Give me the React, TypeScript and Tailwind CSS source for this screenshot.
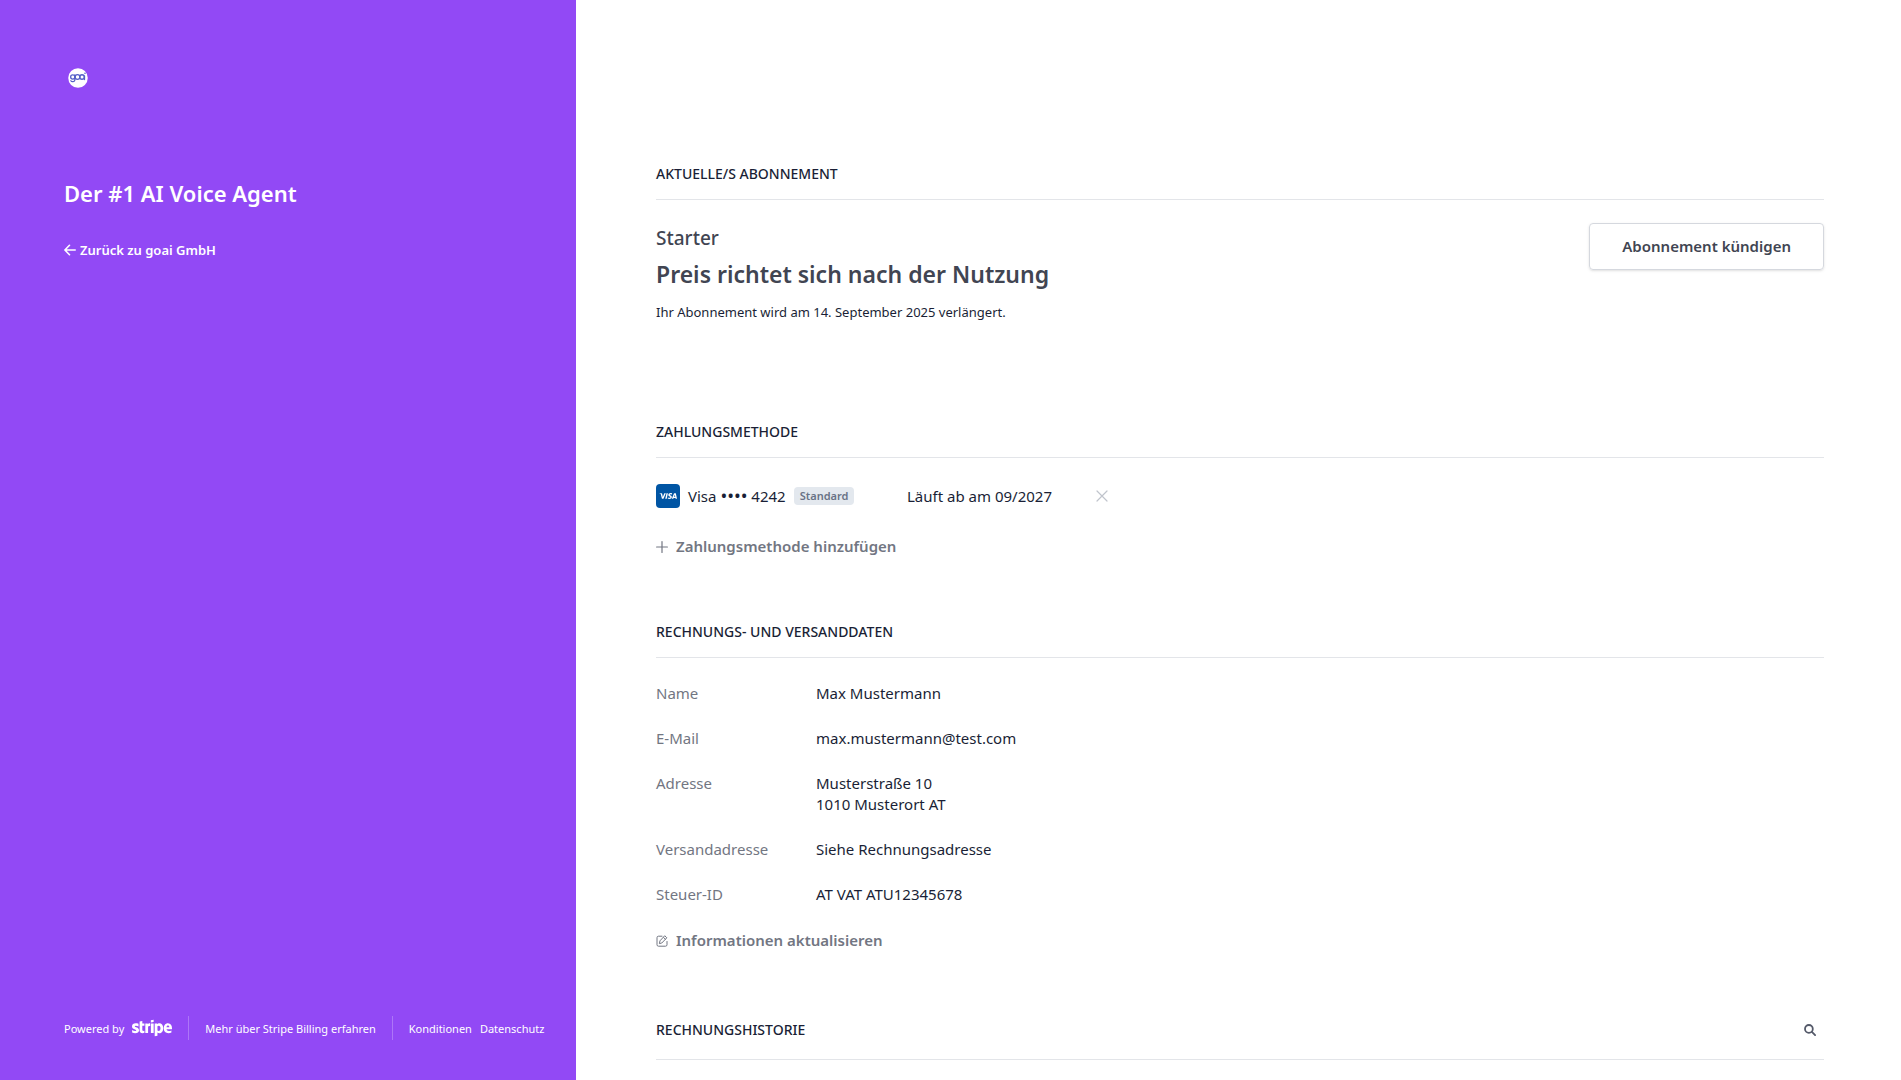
import type { ReactNode } from "react";
import { FaStripe } from "react-icons/fa6";
import { SiVisa } from "react-icons/si";

function GoaiLogo() {
  return (
    <svg viewBox="0 0 40 40" className="ml-1 size-5" role="img" aria-label="goai">
      <circle cx="20" cy="20" r="19.5" fill="#fff" />
      <g fill="none" stroke="#5560c8" strokeWidth="2.6" strokeLinecap="round">
        <circle cx="9.5" cy="18" r="4.2" />
        <path d="M13.700 14v10c0 4-6.500 4-8 1.500" />
        <circle cx="19" cy="18" r="4.800" />
        <circle cx="28" cy="18" r="4.500" />
        <path d="M33 16v7" />
      </g>
      <circle cx="34" cy="10.500" r="1.600" fill="#5560c8" />
    </svg>
  );
}

function ArrowLeftIcon() {
  return (
    <svg viewBox="0 0 12 12" className="size-3" fill="none" stroke="currentColor" strokeWidth="1.6" strokeLinecap="round" strokeLinejoin="round" aria-hidden="true">
      <path d="M11.200 6H1M5.500 1.300L0.900 6l4.600 4.700" />
    </svg>
  );
}

function PlusIcon() {
  return (
    <svg viewBox="0 0 12 12" className="size-3" fill="none" stroke="currentColor" strokeWidth="1.2" strokeLinecap="round" aria-hidden="true">
      <path d="M6 0.600v10.800M0.600 6h10.800" />
    </svg>
  );
}

function CrossIcon() {
  return (
    <svg viewBox="0 0 12 12" className="size-3" fill="none" stroke="currentColor" strokeWidth="1.2" strokeLinecap="round" aria-hidden="true">
      <path d="M1 1l10 10M11 1L1 11" />
    </svg>
  );
}

function EditIcon() {
  return (
    <svg viewBox="0 0 12 12" className="size-3" fill="none" stroke="currentColor" strokeWidth="1" strokeLinecap="round" strokeLinejoin="round" aria-hidden="true">
      <path d="M6 1.200H2.500a1.500 1.500 0 0 0-1.500 1.500v7a1.500 1.500 0 0 0 1.500 1.500h7a1.500 1.500 0 0 0 1.500-1.500V6.500" />
      <path d="M9 1l1.800 1.800-5 5.200-2.400.6.500-2.400zM7.600 2.500l1.800 1.800" />
    </svg>
  );
}

function SearchIcon() {
  return (
    <svg viewBox="0 0 12 12" className="size-3" fill="none" stroke="currentColor" strokeWidth="1.800" strokeLinecap="round" aria-hidden="true">
      <circle cx="4.900" cy="4.900" r="3.900" />
      <path d="M7.900 7.900l3.200 3.200" />
    </svg>
  );
}

function SectionHeading({ children }: { children: ReactNode }) {
  return (
    <h2 className="border-b border-[#e3e5e9] pb-[15px] text-sm leading-5 font-medium text-[#1a1f36] uppercase">
      {children}
    </h2>
  );
}

const details: { label: string; value: string[] }[] = [
  { label: "Name", value: ["Max Mustermann"] },
  { label: "E-Mail", value: ["max.mustermann@test.com"] },
  { label: "Adresse", value: ["Musterstraße 10", "1010 Musterort AT"] },
  { label: "Versandadresse", value: ["Siehe Rechnungsadresse"] },
  { label: "Steuer-ID", value: ["AT VAT ATU12345678"] },
];

function Sidebar() {
  return (
    <aside className="flex w-[576px] shrink-0 flex-col bg-[#9249f5] px-16 pt-17 text-white">
      <GoaiLogo />
      <h1 className="mt-[89px] text-[22px] leading-8 font-semibold">Der #1 AI Voice Agent</h1>
      <a href="#zurueck" className="mt-[31px] flex items-center gap-1 text-[13px] leading-5 font-semibold">
        <ArrowLeftIcon />
        Zurück zu goai GmbH
      </a>
      <footer className="mt-auto mb-10 flex h-6 items-center text-[11px] whitespace-nowrap">
        <a href="#stripe" className="flex items-center gap-2">
          Powered by
          <FaStripe className="h-8 w-10" aria-label="Stripe" />
        </a>
        <a href="#billing" className="ml-4 flex h-6 items-center border-l border-white/25 pl-4">
          Mehr über Stripe Billing erfahren
        </a>
        <nav className="ml-4 flex h-6 items-center gap-2 border-l border-white/25 pl-4">
          <a href="#konditionen">Konditionen</a>
          <a href="#datenschutz">Datenschutz</a>
        </nav>
      </footer>
    </aside>
  );
}

export default function App() {
  return (
    <div className="flex min-h-screen bg-white font-['Noto_Sans',sans-serif] text-[15px] leading-[21px] text-[#1a1f36]">
      <Sidebar />
      <main className="min-w-0 flex-1 pt-41 pr-[77px] pl-20">
        <section>
          <SectionHeading>Aktuelle/s Abonnement</SectionHeading>
          <div className="mt-[23px] flex items-start justify-between">
            <div>
              <p className="mt-[3px] text-[19px] leading-6 font-medium text-[#414552]">Starter</p>
              <p className="mt-2 text-[23px] leading-8 font-semibold text-[#414552]">Preis richtet sich nach der Nutzung</p>
              <p className="mt-3 text-[13px] leading-5">Ihr Abonnement wird am 14. September 2025 verlängert.</p>
            </div>
            <button type="button" className="rounded border border-[#d5d8de] px-8 py-3 font-semibold text-[#414552] shadow-sm">
              Abonnement kündigen
            </button>
          </div>
        </section>

        <section className="mt-25">
          <SectionHeading>Zahlungsmethode</SectionHeading>
          <div className="mt-6.5 flex h-6 items-center">
            <div className="flex w-[251px] items-center">
              <span className="flex size-6 items-center justify-center rounded bg-[#0055a4] text-white">
                <SiVisa className="size-[18px]" aria-hidden="true" />
              </span>
              <span className="ml-2">
                Visa <span className="text-lg leading-5">••••</span> 4242
              </span>
              <span className="ml-2 rounded bg-[#e3e8ee] px-1.5 text-[11px] leading-[18px] font-semibold text-[#697386]">
                Standard
              </span>
            </div>
            <span>Läuft ab am 09/2027</span>
            <button type="button" aria-label="Zahlungsmethode entfernen" className="ml-11 text-[#c0c4cc]">
              <CrossIcon />
            </button>
          </div>
          <button type="button" className="mt-7 flex items-center gap-2 font-semibold text-[#727682]">
            <PlusIcon />
            Zahlungsmethode hinzufügen
          </button>
        </section>

        <section className="mt-[65px]">
          <SectionHeading>Rechnungs- und Versanddaten</SectionHeading>
          <dl className="mt-[25px] flex flex-col gap-6">
            {details.map((row) => (
              <div key={row.label} className="flex">
                <dt className="w-40 shrink-0 text-[#727682]">{row.label}</dt>
                <dd>
                  {row.value.map((line) => (
                    <div key={line}>{line}</div>
                  ))}
                </dd>
              </div>
            ))}
          </dl>
          <button type="button" className="mt-[25px] flex items-center gap-2 font-semibold text-[#727682]">
            <EditIcon />
            Informationen aktualisieren
          </button>
        </section>

        <section className="mt-[69px]">
          <div className="flex items-center justify-between border-b border-[#e3e5e9] pb-[19px]">
            <h2 className="text-sm leading-5 font-medium uppercase">Rechnungshistorie</h2>
            <button type="button" aria-label="Suchen" className="px-2 text-[#545969]">
              <SearchIcon />
            </button>
          </div>
        </section>
      </main>
    </div>
  );
}
